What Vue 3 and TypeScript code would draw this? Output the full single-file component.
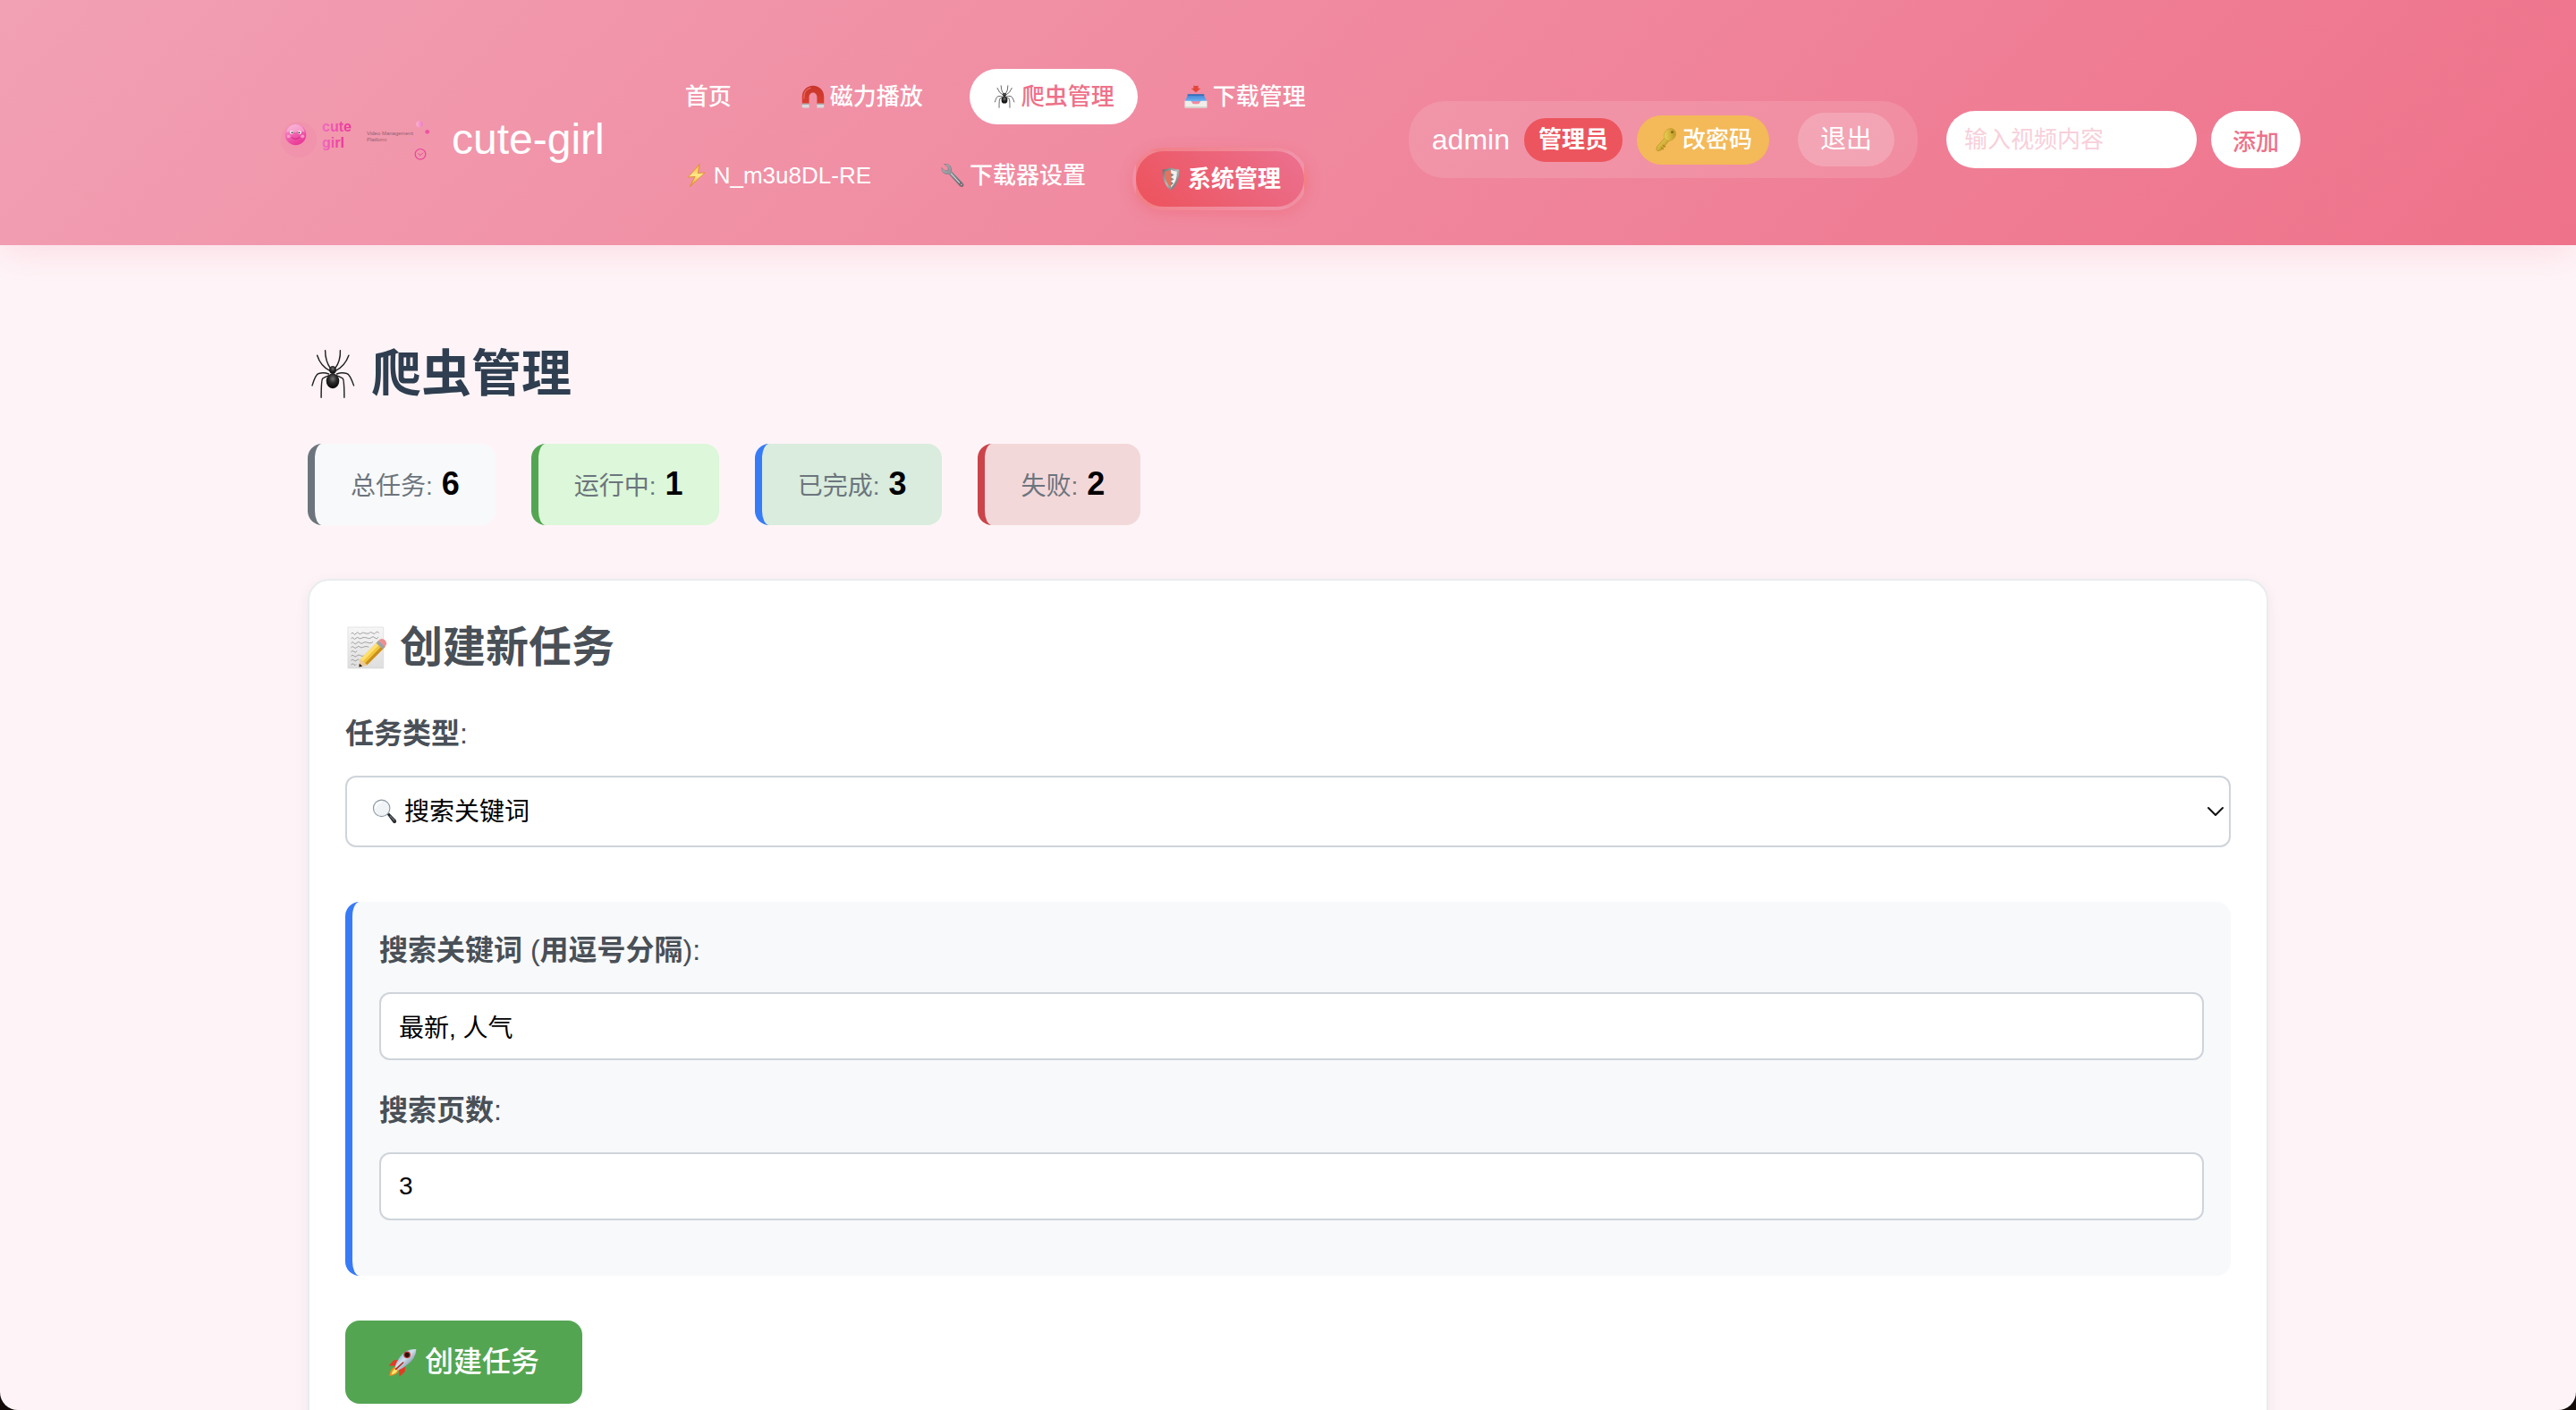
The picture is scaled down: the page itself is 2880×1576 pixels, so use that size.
<script setup lang="ts">
import { ref } from 'vue'

interface NavItem {
  label: string
  icon?: string
  state?: 'active' | 'system'
}

interface Stat {
  label: string
  value: number
  kind: string
}

const navItems: NavItem[] = [
  { label: '首页' },
  { label: '磁力播放', icon: 'magnet' },
  { label: '爬虫管理', icon: 'spider', state: 'active' },
  { label: '下载管理', icon: 'inbox' },
  { label: 'N_m3u8DL-RE', icon: 'bolt' },
  { label: '下载器设置', icon: 'wrench' },
  { label: '系统管理', icon: 'shield', state: 'system' },
]

const stats: Stat[] = [
  { label: '总任务:', value: 6, kind: 'total' },
  { label: '运行中:', value: 1, kind: 'running' },
  { label: '已完成:', value: 3, kind: 'done' },
  { label: '失败:', value: 2, kind: 'failed' },
]

const video = ref('')
const taskType = ref('search')
const keywords = ref('最新, 人气')
const pages = ref(3)
</script>

<template>
  <div class="page">
    <svg class="sprite" aria-hidden="true">
      <defs>
        <linearGradient id="gMagnet" x1="0" y1="0" x2="0" y2="1">
          <stop offset="0" stop-color="#c8352c" /><stop offset="1" stop-color="#d9402f" />
        </linearGradient>
        <radialGradient id="gSpider" cx=".5" cy=".35" r=".6">
          <stop offset="0" stop-color="#777" /><stop offset=".5" stop-color="#2a2a2a" /><stop offset="1" stop-color="#0b0b0b" />
        </radialGradient>
        <linearGradient id="gTray" x1="0" y1="0" x2="0" y2="1">
          <stop offset="0" stop-color="#3f7fd0" /><stop offset="1" stop-color="#6db1f3" />
        </linearGradient>
        <linearGradient id="gBolt" x1="0" y1="0" x2="0" y2="1">
          <stop offset="0" stop-color="#f6b53a" /><stop offset=".5" stop-color="#ffe98a" /><stop offset="1" stop-color="#ee9a2c" />
        </linearGradient>
        <linearGradient id="gSteel" x1="0" y1="0" x2="1" y2="1">
          <stop offset="0" stop-color="#b9bcc0" /><stop offset=".5" stop-color="#85898f" /><stop offset="1" stop-color="#5c6066" />
        </linearGradient>
        <linearGradient id="gRim" x1="0" y1="0" x2="1" y2="1">
          <stop offset="0" stop-color="#5d6a6b" /><stop offset=".5" stop-color="#b4bcba" /><stop offset="1" stop-color="#4b5658" />
        </linearGradient>
        <linearGradient id="gKey" x1="0" y1="0" x2="1" y2="1">
          <stop offset="0" stop-color="#f3dc5c" /><stop offset="1" stop-color="#b48a1e" />
        </linearGradient>
        <linearGradient id="gPaper" x1="0" y1="0" x2="0" y2="1">
          <stop offset="0" stop-color="#f6f6f6" /><stop offset="1" stop-color="#dedede" />
        </linearGradient>
        <linearGradient id="gRocket" x1="0" y1="0" x2="1" y2="1">
          <stop offset="0" stop-color="#3d78b8" /><stop offset=".45" stop-color="#d3e0ec" /><stop offset="1" stop-color="#3c5878" />
        </linearGradient>
        <linearGradient id="gBall" x1=".2" y1="0" x2=".7" y2="1">
          <stop offset="0" stop-color="#f59fd0" /><stop offset=".5" stop-color="#f05fae" /><stop offset="1" stop-color="#e93392" />
        </linearGradient>
        <linearGradient id="gWord" x1="0" y1="0" x2="1" y2="0">
          <stop offset="0" stop-color="#f06cc2" /><stop offset="1" stop-color="#ea3596" />
        </linearGradient>
        <linearGradient id="gDot" x1="0" y1="0" x2="1" y2="0">
          <stop offset="0" stop-color="#f9b4cf" /><stop offset="1" stop-color="#f07cc6" />
        </linearGradient>
      </defs>
      <symbol id="magnet" viewBox="0 0 100 100">
        <path d="M3 84V50a47 47 0 0 1 94 0v34H67V52a17 19 0 0 0-34 0v32z" fill="url(#gMagnet)" />
        <path d="M11 60V48a39 39 0 0 1 30-36" fill="none" stroke="#e8695c" stroke-width="5" />
        <path d="M3 80h30v18H8q-5 0-5-5zM67 80h30v13q0 5-5 5H67z" fill="#d9dadd" />
        <path d="M3 80h30v5H3zM67 80h30v5H67z" fill="#a9abb0" />
      </symbol>
      <symbol id="spider" viewBox="0 0 100 100">
        <g fill="none" stroke="#222" stroke-width="2.600" stroke-linecap="round" stroke-linejoin="round">
          <path d="M35 3Q35 24 46 40M65 3Q66 24 54 40M19 13Q26 35 45 44M82 13Q74 35 55 44" />
          <path d="M9 73Q16 50 22 49Q32 46 42 50M92 73Q84 50 78 49Q68 46 58 50" />
          <path d="M27 97Q27 62 30 59Q34 56 43 53M73 97Q73 62 70 59Q66 56 57 53" />
        </g>
        <ellipse cx="50" cy="42" rx="7" ry="8" fill="url(#gSpider)" />
        <ellipse cx="50" cy="64" rx="13" ry="15" fill="url(#gSpider)" />
      </symbol>
      <symbol id="inbox" viewBox="0 0 100 100">
        <path d="M17 40h66l14 30H3z" fill="url(#gTray)" />
        <path d="M14 40h72v5H14z" fill="#2f68b4" />
        <path d="M2 68h24q5 0 7 7t8 7h18q6 0 8-7t7-7h24v26q0 5-5 5H7q-5 0-5-5z" fill="#efeee9" />
        <path d="M2 93h96q0 6-5 6H7q-5 0-5-6z" fill="#cfcdc6" />
        <path d="M40 2q10 4 20 0v12h11L50 32 29 14h11z" fill="#e2473a" />
      </symbol>
      <symbol id="bolt" viewBox="0 0 100 100">
        <path d="M62 2 13 58l30-3-22 43 64-60-30 3z" fill="url(#gBolt)" stroke="#d98f1f" stroke-width="3" stroke-linejoin="round" />
      </symbol>
      <symbol id="wrench" viewBox="0 0 100 100">
        <path d="M14 2q16-4 26 8 7 10 4 22l50 53q6 7 0 12-6 5-12-1L33 43q-12 4-22-4Q1 30 3 17l14 14 14-3 1-13z" fill="url(#gSteel)" stroke="#6b6f75" stroke-width="2" />
        <path d="M44 43 80 82" stroke="#d5d8db" stroke-width="4" stroke-linecap="round" />
        <circle cx="88" cy="90" r="4" fill="#f08a9e" />
      </symbol>
      <symbol id="shield" viewBox="0 0 100 100">
        <path d="M50 1q18 8 36 9 3 62-36 89Q11 72 14 10 32 9 50 1z" fill="url(#gRim)" />
        <path d="M50 11v76Q22 62 24 18q14-1 26-7z" fill="#e2735f" />
        <path d="M50 11v76q28-25 26-69-14-1-26-7z" fill="#f3f1ee" />
        <path d="m50 24 14 9-14 9 14 9-14 9 12 9-12 9z" fill="#7e8a92" />
      </symbol>
      <symbol id="key" viewBox="0 0 100 100">
        <path d="m50 40 17 13-37 43-14 3-5-6 3-13z" fill="url(#gKey)" stroke="#a07c1c" stroke-width="2" />
        <path d="m30 84 12 8M38 74l12 8" stroke="#b48a1e" stroke-width="6" />
        <ellipse cx="69" cy="29" rx="28" ry="24" transform="rotate(-55 69 29)" fill="url(#gKey)" stroke="#c09a28" stroke-width="2" />
        <circle cx="79" cy="18" r="6" fill="#8f6e18" />
      </symbol>
      <symbol id="memo" viewBox="0 0 100 100">
        <path d="M6 2h83v96H6z" fill="url(#gPaper)" stroke="#cfcfcf" />
        <g fill="none" stroke="#888" stroke-width="1.600" stroke-linecap="round">
          <path d="M14 17q3-5 5 0t6 0 6-1 6 1 6-2 7 2 7-2 7 1 7-1 7 0M14 28q3-4 5 0t6 0 6-1 6 1 8-2 8 2 8-2 8 1 8-1" />
          <path d="M14 39q3-5 6 0t7 0 7-1 7 1 7-2 8 2 8-2M14 49q3-4 6 0t7 0 7-1 7 1 7-2 6 1M14 59q3-4 6 0t7-1M14 69q3-4 6 0t7 0 8-1 7 1M14 79q3-4 6 0t7 0 5-1M14 89q3-4 6 0t5 0" />
        </g>
        <path d="m77 34 16 14-42 42-19 5 3-18z" fill="#f2c43a" />
        <path d="m77 34 6 5-42 43-6-5z" fill="#ffdf6e" />
        <path d="m88 43 5 5-42 42-5-4z" fill="#c98f1e" />
        <path d="m35 77 16 13-19 5z" fill="#ecc99a" /><path d="m33 87 7 6-8 2z" fill="#222" />
        <path d="m72 39 6-6 15 14-6 6z" fill="#9da3a8" />
        <path d="m78 33 3-3q7-3 12 3 5 6 2 11l-3 4z" fill="#ee8f92" />
      </symbol>
      <symbol id="magnifier" viewBox="0 0 100 100">
        <path d="m60 62 8-6 27 28q4 6 0 11-6 4-11 0z" fill="#26292d" />
        <path d="m72 68 16 17" stroke="#7b8085" stroke-width="4" stroke-linecap="round" />
        <circle cx="38" cy="37" r="33" fill="#f1f4f6" stroke="#8c98a5" stroke-width="4" />
        <path d="M14 34a25 25 0 0 1 22-21" fill="none" stroke="#fff" stroke-width="6" stroke-linecap="round" />
      </symbol>
      <symbol id="rocket" viewBox="0 0 100 100">
        <path d="M36 40 19 42 2 61l26 1zM60 64l-2 18-19 17-1-27z" fill="#e33b26" />
        <path d="M26 64Q8 68 4 97q28-2 34-22z" fill="#f08a24" /><path d="M26 70Q14 76 11 92q17-4 21-14z" fill="#ffe86b" />
        <path d="M98 3Q60 1 40 32 26 52 24 66l10 11q16-5 32-19Q97 36 98 3z" fill="url(#gRocket)" />
        <path d="m52 50-25 23" stroke="#b42d1e" stroke-width="5" stroke-linecap="round" />
        <circle cx="66" cy="23" r="12" fill="#b5352b" /><circle cx="66" cy="23" r="8" fill="#26140f" />
      </symbol>
    </svg>

    <header class="header">
      <div class="header-inner">
        <a class="brand" href="#">
          <svg class="logo" viewBox="0 0 180 60" role="img" aria-label="cute girl Video Management Platform">
            <circle cx="26" cy="30" r="20" fill="#e9609a" opacity=".1" />
            <circle cx="22.500" cy="24.500" r="11.800" fill="url(#gBall)" />
            <path d="M12.500 22a10 9 0 0 1 20 0q-5-3-10 0-5-2-10 0z" fill="#fbc6df" opacity=".55" />
            <circle cx="18" cy="22" r="1.900" fill="#fff" /><circle cx="27" cy="22" r="1.900" fill="#fff" />
            <circle cx="18.500" cy="22.300" r="1" fill="#444" /><circle cx="26.500" cy="22.300" r="1" fill="#444" />
            <circle cx="14.700" cy="26.300" r="1.900" fill="#f79cc8" /><circle cx="30.300" cy="26.300" r="1.900" fill="#f79cc8" />
            <path d="M18 27.500q4.500 3.500 9 0" fill="none" stroke="#c8207c" stroke-width=".9" />
            <text x="52" y="21" font-size="16" font-weight="700" fill="url(#gWord)">cute</text>
            <text x="52" y="39" font-size="16" font-weight="700" fill="url(#gWord)">girl</text>
            <text x="102" y="25" font-size="6" fill="#96606f">Video Management</text>
            <text x="102" y="32" font-size="6" fill="#96606f">Platform</text>
            <circle cx="161" cy="12.700" r="3.700" fill="url(#gDot)" />
            <circle cx="169.700" cy="21.300" r="2.400" fill="#ee559f" />
            <circle cx="152.700" cy="30.300" r="1.200" fill="#f48ccc" />
            <circle cx="162" cy="46.300" r="5.800" fill="none" stroke="#e9439a" stroke-width="1.200" />
            <path d="m159.500 45.500 2.500 2.200 3-3" fill="none" stroke="#e9439a" />
          </svg>
          <span class="brand-name">cute-girl</span>
        </a>

        <nav class="nav">
          <a v-for="item in navItems" :key="item.label" href="#" class="nav-link" :class="item.state">
            <svg v-if="item.icon" class="emoji" aria-hidden="true"><use :href="'#' + item.icon" /></svg>
            <span>{{ item.label }}</span>
          </a>
        </nav>

        <div class="tools">
          <div class="user">
            <span class="user-name">admin</span>
            <span class="role">管理员</span>
            <button type="button" class="password">
              <svg class="emoji" aria-hidden="true"><use href="#key" /></svg>
              <span>改密码</span>
            </button>
            <button type="button" class="logout">退出</button>
          </div>
          <form class="add" @submit.prevent>
            <input v-model="video" class="add-input" type="text" placeholder="输入视频内容" aria-label="输入视频内容" />
            <button type="submit" class="add-button">添加</button>
          </form>
        </div>
      </div>
    </header>

    <main class="main">
      <h1 class="title">
        <svg class="emoji" aria-hidden="true"><use href="#spider" /></svg>
        <span>爬虫管理</span>
      </h1>

      <div class="stats">
        <div v-for="stat in stats" :key="stat.kind" class="stat" :class="stat.kind">
          <span class="stat-label">{{ stat.label }}</span>
          <strong class="stat-value">{{ stat.value }}</strong>
        </div>
      </div>

      <form class="card" @submit.prevent>
        <h2 class="card-title">
          <svg class="emoji" aria-hidden="true"><use href="#memo" /></svg>
          <span>创建新任务</span>
        </h2>

        <label class="label" for="task-type"><b>任务类型</b>:</label>
        <div class="select-wrap">
          <select id="task-type" v-model="taskType" class="field select">
            <option value="search">搜索关键词</option>
          </select>
          <svg class="emoji select-icon" aria-hidden="true"><use href="#magnifier" /></svg>
          <svg class="chevron" viewBox="0 0 20 12" aria-hidden="true">
            <path d="m2 2 8 8 8-8" fill="none" stroke="#111" stroke-width="2" stroke-linecap="round" stroke-linejoin="round" />
          </svg>
        </div>

        <div class="panel">
          <div class="group">
            <label class="label" for="keywords"><b>搜索关键词</b> (<b>用逗号分隔</b>):</label>
            <input id="keywords" v-model="keywords" class="field" type="text" />
          </div>
          <div class="group">
            <label class="label" for="pages"><b>搜索页数</b>:</label>
            <input id="pages" v-model="pages" class="field" type="number" min="1" />
          </div>
        </div>

        <button type="submit" class="create">
          <svg class="emoji" aria-hidden="true"><use href="#rocket" /></svg>
          <span>创建任务</span>
        </button>
      </form>
    </main>

    <div class="window-corners" aria-hidden="true"></div>
  </div>
</template>

<style>
body {
  margin: 0;
  background: #fef4f7;
}
</style>

<style scoped>
.page {
  min-height: 100vh;
  color: #000;
  font-family: "Liberation Sans", "Noto Sans CJK SC", sans-serif;
}

.page *,
.page *::before {
  box-sizing: border-box;
}

.sprite {
  position: absolute;
  width: 0;
  height: 0;
}

button,
input,
select {
  margin: 0;
  font-family: inherit;
}

button {
  border: 0;
  color: inherit;
  cursor: pointer;
}

a {
  color: inherit;
  text-decoration: none;
}

.emoji {
  flex: none;
  width: 1em;
  height: 1em;
}

.header {
  padding: 77px 40px 39px;
  color: #fff;
  background: linear-gradient(135deg, #f2a0b4, #ee728a);
  box-shadow: 0 4px 40px rgba(240, 112, 140, 0.2);
}

.header-inner {
  display: flex;
  align-items: center;
  gap: 64px;
  max-width: 2264px;
  margin: 0 auto;
}

.brand {
  display: flex;
  align-items: center;
  gap: 17px;
}

.logo {
  width: 180px;
  height: 60px;
}

.brand-name {
  font-size: 48px;
  line-height: 60px;
  white-space: nowrap;
}

.nav {
  display: flex;
  flex: 1;
  flex-wrap: wrap;
  align-items: flex-start;
  gap: 26px;
}

.nav-link {
  display: flex;
  align-items: center;
  gap: 6px;
  padding: 12px 26px;
  border-radius: 40px;
  font-size: 26px;
  line-height: 38px;
  font-weight: 500;
  white-space: nowrap;
}

.nav-link.active {
  color: #ee7189;
  background: #fff;
}

.nav-link.system {
  border: 4px solid rgba(255, 255, 255, 0.25);
  font-weight: 700;
  background: linear-gradient(45deg, #ed525b, #eb7190);
  box-shadow: 0 4px 16px rgba(238, 82, 94, 0.3);
}

.tools {
  display: flex;
  flex: none;
  align-items: center;
  gap: 32px;
}

.user {
  display: flex;
  align-items: center;
  gap: 16px;
  padding: 13px 26px;
  border-radius: 40px;
  background: rgba(255, 255, 255, 0.12);
}

.user-name {
  font-size: 32px;
  line-height: 40px;
}

.role {
  padding: 6px 16px;
  border-radius: 24px;
  font-size: 26px;
  line-height: 37px;
  font-weight: 700;
  background: #ec555d;
}

.password {
  display: flex;
  align-items: center;
  gap: 6px;
  padding: 8px 19px;
  border-radius: 30px;
  font-size: 26px;
  line-height: 39px;
  font-weight: 500;
  background: #f4b958;
}

.logout {
  margin-left: 16px;
  padding: 10px 25px;
  border-radius: 30px;
  font-size: 29px;
  line-height: 40px;
  background: rgba(255, 255, 255, 0.2);
}

.add {
  display: flex;
  gap: 16px;
}

.add-input {
  width: 280px;
  height: 64px;
  padding: 0 20px;
  border: 0;
  border-radius: 32px;
  font-size: 26px;
  background: #fff;
}

.add-input::placeholder {
  color: #f8cfda;
}

.add-button {
  height: 64px;
  padding: 0 24px;
  border-radius: 32px;
  color: #ee7189;
  font-size: 26px;
  font-weight: 500;
  background: #fff;
}

.main {
  max-width: 2192px;
  margin: 0 auto;
  padding: 104px 0 80px;
}

.title {
  display: flex;
  align-items: center;
  gap: 15px;
  margin: 0 0 38px;
  color: #2f3e50;
  font-size: 56px;
  line-height: 80px;
}

.stats {
  display: flex;
  flex-wrap: wrap;
  gap: 40px;
}

.stat {
  display: flex;
  align-items: baseline;
  gap: 10px;
  padding: 23px 40px 22px;
  border-left: 8px solid;
  border-radius: 16px;
  line-height: 43px;
}

.stat.total {
  border-color: #6c757d;
  background: #f8f9fb;
}

.stat.running {
  border-color: #54a552;
  background: #dcf7d9;
}

.stat.done {
  border-color: #387bf7;
  background: #d9ecdd;
}

.stat.failed {
  border-color: #cb444a;
  background: #f3d8da;
}

.stat-label {
  color: #6c757d;
  font-size: 28px;
}

.stat-value {
  font-size: 36px;
}

.card {
  margin-top: 60px;
  padding: 42px 40px 40px;
  border: 2px solid #e9ecef;
  border-radius: 24px;
  background: #fff;
  box-shadow: 0 4px 16px rgba(0, 0, 0, 0.06);
}

.card-title {
  display: flex;
  align-items: center;
  gap: 13px;
  margin: 0 0 43px;
  color: #495057;
  font-size: 48px;
  line-height: 66px;
}

.label {
  display: block;
  margin-bottom: 27px;
  color: #495057;
  font-size: 32px;
  line-height: 40px;
}

.field {
  display: block;
  width: 100%;
  height: 76px;
  padding: 0 20px;
  border: 2px solid #ced4da;
  border-radius: 12px;
  color: #000;
  font-size: 28px;
  background: #fff;
}

.select-wrap {
  position: relative;
}

.select {
  height: 80px;
  padding: 0 64px;
  appearance: none;
}

.select-icon,
.chevron {
  position: absolute;
  top: 50%;
  transform: translateY(-50%);
  pointer-events: none;
}

.select-icon {
  left: 30px;
  font-size: 28px;
}

.chevron {
  right: 7px;
  width: 20px;
  height: 12px;
}

.panel {
  display: flex;
  flex-direction: column;
  gap: 36px;
  margin: 61px 0 50px;
  padding: 34px 30px 62px;
  border-left: 8px solid #387bf7;
  border-radius: 16px;
  background: #f8f9fb;
}

.create {
  display: flex;
  align-items: center;
  gap: 9px;
  padding: 24px 48px;
  border-radius: 16px;
  color: #fff;
  font-size: 32px;
  line-height: 45px;
  font-weight: 500;
  background: #54a552;
}

.window-corners {
  position: fixed;
  inset: 0;
  border-radius: 0 0 20px 20px;
  box-shadow: 0 0 0 40px #120b09;
  pointer-events: none;
}
</style>
